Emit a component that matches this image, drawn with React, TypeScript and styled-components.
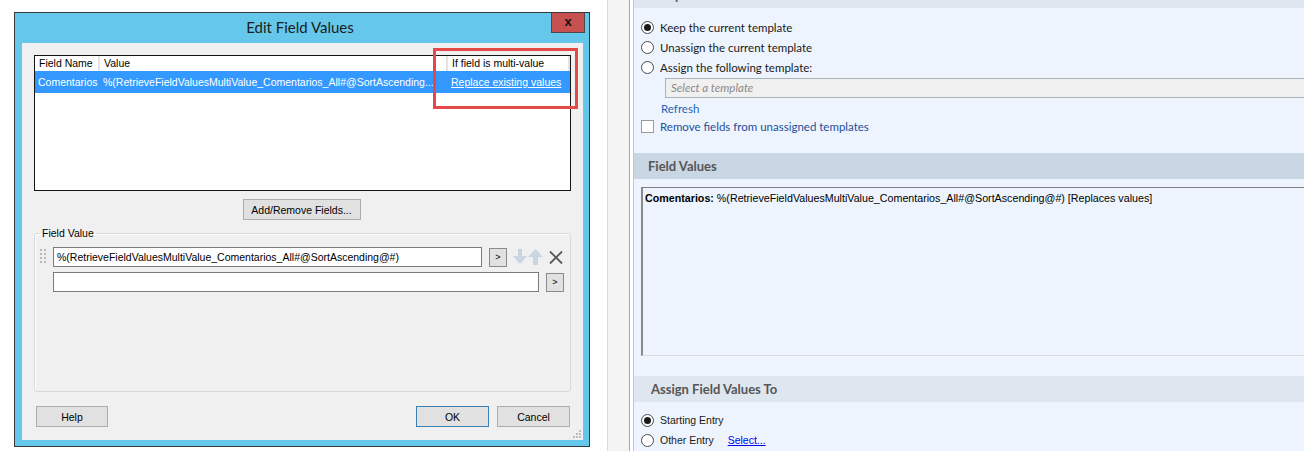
import React from "react";
import styled, { createGlobalStyle } from "styled-components";

const GlobalStyle = createGlobalStyle`
  html, body {
    margin: 0;
    padding: 0;
    background: #fff;
  }
  body {
    font-family: "Liberation Sans", Arial, sans-serif;
    overflow: hidden;
  }
`;

const Page = styled.div`
  display: flex;
  width: 1304px;
  height: 451px;
  overflow: hidden;
  background: #fff;
`;

const LeftArea = styled.div`
  flex: none;
  width: 607px;
  box-sizing: border-box;
  padding: 12px 0 0 14px;
`;

/* ---------- dialog window ---------- */

const Window = styled.div`
  width: 576px;
  height: 435px;
  box-sizing: border-box;
  border: 1px solid #3a3a3a;
  background: #65c8ea;
  display: flex;
  flex-direction: column;
`;

const TitleBar = styled.div`
  flex: none;
  height: 30px;
  display: grid;
  grid-template-columns: 1fr auto 1fr;
  align-items: start;
  padding-right: 4px;
`;

const Title = styled.div`
  grid-column: 2;
  font-family: Lato, "Liberation Sans", sans-serif;
  font-size: 15px;
  line-height: 29px;
  color: #1c1c1c;
`;

const CloseButton = styled.div`
  grid-column: 3;
  justify-self: end;
  width: 34px;
  height: 20px;
  box-sizing: border-box;
  border: 1px solid #4a4a4a;
  border-top: none;
  background: #c75050;
  color: #111;
  font-weight: bold;
  font-size: 13px;
  line-height: 17px;
  text-align: center;
`;

const Content = styled.div`
  position: relative;
  flex: 1;
  margin: 0 6px 6px 7px;
  background: #f0f0f0;
  padding: 12px 12px 13px 12px;
  display: flex;
  flex-direction: column;
  font-size: 10.5px;
  color: #000;
`;

const ListWrap = styled.div`
  position: relative;
  flex: none;
`;

const ListView = styled.div`
  height: 136px;
  box-sizing: border-box;
  border: 1px solid #151515;
  background: #fff;
`;

const ListRow = styled.div<{ $selected?: boolean }>`
  display: grid;
  grid-template-columns: 65px 348px 1fr;
  height: ${(p) => (p.$selected ? "22px" : "15px")};
  align-items: center;
  background: ${(p) => (p.$selected ? "#3399ff" : "#fff")};
  color: ${(p) => (p.$selected ? "#fff" : "#000")};
`;

const HeaderCell = styled.div`
  height: 100%;
  box-sizing: border-box;
  border-right: 2px solid #e3e3e3;
  padding-left: 4px;
  line-height: 15px;
  white-space: nowrap;
  overflow: hidden;
`;

const Cell = styled.div<{ $link?: boolean }>`
  padding-left: 3px;
  white-space: nowrap;
  overflow: hidden;
  text-decoration: ${(p) => (p.$link ? "underline" : "none")};
`;

const Highlight = styled.div`
  position: absolute;
  left: 399px;
  top: -7px;
  width: 145px;
  height: 61px;
  box-sizing: border-box;
  border: 3px solid #e54848;
  pointer-events: none;
`;

const Button = styled.button<{ $default?: boolean; $width?: number }>`
  height: 21px;
  width: ${(p) => (p.$width ? `${p.$width}px` : "auto")};
  padding: 0 6px;
  box-sizing: border-box;
  border: 1px solid ${(p) => (p.$default ? "#3c7fb1" : "#adadad")};
  background: #e1e1e1;
  font-family: "Liberation Sans", Arial, sans-serif;
  font-size: 10.5px;
  color: #000;
`;

const AddRemove = styled(Button)`
  align-self: center;
  margin-top: 8px;
  margin-left: -2px;
  width: 118px;
`;

const Group = styled.fieldset`
  flex: 1;
  min-width: 0;
  margin: 7px 0 14px 0;
  padding: 7px 5px 0 5px;
  border: 1px solid #d5dadf;
  border-radius: 3px;
  box-shadow: inset 1px 1px 0 #fff;
`;

const Legend = styled.legend`
  padding: 0 2px;
  margin-left: 0;
  font-size: 10.5px;
  line-height: 13px;
`;

const ValueRow = styled.div`
  display: flex;
  align-items: center;
  height: 20px;
  & + & {
    margin-top: 5px;
  }
`;

const Grip = styled.div`
  flex: none;
  width: 13px;
  height: 20px;
  display: flex;
  align-items: center;
`;

const TextInput = styled.div<{ $width: number }>`
  flex: none;
  width: ${(p) => p.$width}px;
  height: 20px;
  box-sizing: border-box;
  border: 1px solid #7a7a7a;
  background: #fff;
  padding-left: 3px;
  line-height: 18px;
  white-space: nowrap;
  overflow: hidden;
`;

const MiniButton = styled.div`
  flex: none;
  width: 18px;
  height: 19px;
  margin-left: 7px;
  box-sizing: border-box;
  border: 1px solid #8a8a8a;
  background: #e1e1e1;
  font-size: 9px;
  line-height: 17px;
  text-align: center;
`;

const IconSlot = styled.div<{ $gap: number }>`
  flex: none;
  display: flex;
  margin-left: ${(p) => p.$gap}px;
`;

const Footer = styled.div`
  flex: none;
  display: flex;
  align-items: center;
  padding: 0 1px 0 2px;
  gap: 8px;
`;

const Spacer = styled.div`
  flex: 1;
`;

const ResizeGrip = styled.svg`
  position: absolute;
  right: 2px;
  bottom: 2px;
`;

/* ---------- splitter ---------- */

const Splitter = styled.div`
  flex: none;
  width: 21px;
  background: #f4f4f4;
  border-left: 1px solid #dadada;
  border-right: 1px solid #a9a9a9;
  margin-right: 3px;
`;

/* ---------- right pane ---------- */

const Pane = styled.div`
  flex: 1;
  min-width: 0;
  background: #edf4fe;
  border-left: 1px solid #c0c6ce;
  display: flex;
  flex-direction: column;
  font-family: Lato, "Liberation Sans", sans-serif;
  color: #1a1a1a;
`;

const SectionBar = styled.div<{ $tone: "light" | "dark"; $indent: number; $top?: number }>`
  flex: none;
  height: 26px;
  box-sizing: border-box;
  margin-top: ${(p) => p.$top ?? 0}px;
  padding-left: ${(p) => p.$indent}px;
  background: ${(p) => (p.$tone === "dark" ? "#c9d6e3" : "#dee6f0")};
  font-weight: bold;
  font-size: 13px;
  line-height: 26px;
  color: #555;
`;

const Options = styled.div<{ $top: number }>`
  display: flex;
  flex-direction: column;
  padding-left: 7px;
  margin-top: ${(p) => p.$top}px;
`;

const OptionRow = styled.div<{ $height?: number }>`
  display: flex;
  align-items: center;
  height: ${(p) => p.$height ?? 20}px;
  font-size: 11.5px;
`;

const SmallRow = styled(OptionRow)`
  font-family: "Liberation Sans", Arial, sans-serif;
  font-size: 10.5px;
`;

const Radio = styled.span<{ $checked?: boolean }>`
  flex: none;
  width: 13px;
  height: 13px;
  box-sizing: border-box;
  border-radius: 50%;
  border: 1px solid #4a4a4a;
  background: #fff;
  display: flex;
  align-items: center;
  justify-content: center;
  margin-right: 6px;
  &::after {
    content: "";
    width: 7px;
    height: 7px;
    border-radius: 50%;
    background: ${(p) => (p.$checked ? "#1a1a1a" : "transparent")};
  }
`;

const CheckBox = styled.span`
  flex: none;
  width: 13px;
  height: 13px;
  box-sizing: border-box;
  border: 1px solid #9a9a9a;
  background: #fff;
  margin-right: 6px;
`;

const SelectBox = styled.div`
  height: 20px;
  margin: 1px -4px 0 24px;
  box-sizing: border-box;
  border: 1px solid #acb2b9;
  background: #f0f0f0;
  padding-left: 5px;
  font-size: 11.5px;
  font-style: italic;
  line-height: 18px;
  color: #8a8a8a;
`;

const LinkText = styled.span<{ $color: string; $underline?: boolean; $gap?: number }>`
  color: ${(p) => p.$color};
  margin-left: ${(p) => p.$gap ?? 0}px;
  text-decoration: ${(p) => (p.$underline ? "underline" : "none")};
`;

const RefreshRow = styled(OptionRow)`
  padding-left: 20px;
`;

const SummaryBox = styled.div`
  flex: none;
  height: 169px;
  margin: 8px -4px 0 7px;
  box-sizing: border-box;
  border-top: 1px solid #7f7f7f;
  border-left: 2px solid #8a8a8a;
  border-bottom: 1px solid #dcdcdc;
  padding: 4px 2px;
  font-family: "Liberation Sans", Arial, sans-serif;
  font-size: 10.7px;
  line-height: 13px;
  color: #000;
  white-space: nowrap;
`;

/* ---------- icons ---------- */

const GripDots = () => (
  <svg width="7" height="16" viewBox="0 0 7 16">
    {[0, 4, 8, 12].map((y) =>
      [0, 4].map((x) => (
        <rect key={`${x}-${y}`} x={x} y={y} width="2" height="2" fill="#b9b9b9" />
      ))
    )}
  </svg>
);

const DownArrow = () => (
  <svg width="14" height="16" viewBox="0 0 14 16">
    <path d="M5 0h4v7h5l-7 8-7-8h5z" fill="#c8d5e2" />
  </svg>
);

const UpArrow = () => (
  <svg width="15" height="16" viewBox="0 0 15 16">
    <path d="M7.5 0l7.5 8h-5v8h-5v-8h-5z" fill="#c8d5e2" />
  </svg>
);

const RemoveX = () => (
  <svg width="14" height="13" viewBox="0 0 14 13">
    <path d="M1 0.5l12 12M13 0.5l-12 12" stroke="#555" strokeWidth="1.8" />
  </svg>
);

const App: React.FC = () => {
  return (
    <>
      <GlobalStyle />
      <Page>
        <LeftArea>
          <Window>
            <TitleBar>
              <Title>Edit Field Values</Title>
              <CloseButton>x</CloseButton>
            </TitleBar>
            <Content>
              <ListWrap>
                <ListView>
                  <ListRow>
                    <HeaderCell>Field Name</HeaderCell>
                    <HeaderCell>Value</HeaderCell>
                    <HeaderCell>If field is multi-value</HeaderCell>
                  </ListRow>
                  <ListRow $selected>
                    <Cell>Comentarios</Cell>
                    <Cell>%(RetrieveFieldValuesMultiValue_Comentarios_All#@SortAscending...</Cell>
                    <Cell $link>Replace existing values</Cell>
                  </ListRow>
                </ListView>
                <Highlight />
              </ListWrap>

              <AddRemove>Add/Remove Fields...</AddRemove>

              <Group>
                <Legend>Field Value</Legend>
                <ValueRow>
                  <Grip>
                    <GripDots />
                  </Grip>
                  <TextInput $width={429}>
                    %(RetrieveFieldValuesMultiValue_Comentarios_All#@SortAscending@#)
                  </TextInput>
                  <MiniButton>&gt;</MiniButton>
                  <IconSlot $gap={6}>
                    <DownArrow />
                  </IconSlot>
                  <IconSlot $gap={1}>
                    <UpArrow />
                  </IconSlot>
                  <IconSlot $gap={6}>
                    <RemoveX />
                  </IconSlot>
                </ValueRow>
                <ValueRow>
                  <Grip />
                  <TextInput $width={486} />
                  <MiniButton>&gt;</MiniButton>
                </ValueRow>
              </Group>

              <Footer>
                <Button $width={72}>Help</Button>
                <Spacer />
                <Button $width={73} $default>
                  OK
                </Button>
                <Button $width={73}>Cancel</Button>
              </Footer>

              <ResizeGrip width="8" height="8" viewBox="0 0 8 8">
                <rect x="6" y="0" width="2" height="2" fill="#bdbdbd" />
                <rect x="3" y="3" width="2" height="2" fill="#bdbdbd" />
                <rect x="6" y="3" width="2" height="2" fill="#bdbdbd" />
                <rect x="0" y="6" width="2" height="2" fill="#bdbdbd" />
                <rect x="3" y="6" width="2" height="2" fill="#bdbdbd" />
                <rect x="6" y="6" width="2" height="2" fill="#bdbdbd" />
              </ResizeGrip>
            </Content>
          </Window>
        </LeftArea>

        <Splitter />

        <Pane>
          {/* header of the section above, scrolled mostly out of view */}
          <SectionBar $tone="light" $indent={17} $top={-18}>
            Template
          </SectionBar>

          <Options $top={9}>
            <OptionRow>
              <Radio $checked />
              Keep the current template
            </OptionRow>
            <OptionRow>
              <Radio />
              Unassign the current template
            </OptionRow>
            <OptionRow>
              <Radio />
              Assign the following template:
            </OptionRow>
            <SelectBox>Select a template</SelectBox>
            <RefreshRow>
              <LinkText $color="#2466b4">Refresh</LinkText>
            </RefreshRow>
            <OptionRow $height={16}>
              <CheckBox />
              <LinkText $color="#1f4f99">Remove fields from unassigned templates</LinkText>
            </OptionRow>
          </Options>

          <SectionBar $tone="dark" $indent={14} $top={19}>
            Field Values
          </SectionBar>

          <SummaryBox>
            <b>Comentarios:</b> %(RetrieveFieldValuesMultiValue_Comentarios_All#@SortAscending@#) [Replaces values]
          </SummaryBox>

          <SectionBar $tone="light" $indent={17} $top={20}>
            Assign Field Values To
          </SectionBar>

          <Options $top={8}>
            <SmallRow>
              <Radio $checked />
              Starting Entry
            </SmallRow>
            <SmallRow>
              <Radio />
              Other Entry
              <LinkText $color="#0000ee" $underline $gap={14}>
                Select...
              </LinkText>
            </SmallRow>
          </Options>
        </Pane>
      </Page>
    </>
  );
};

export default App;
